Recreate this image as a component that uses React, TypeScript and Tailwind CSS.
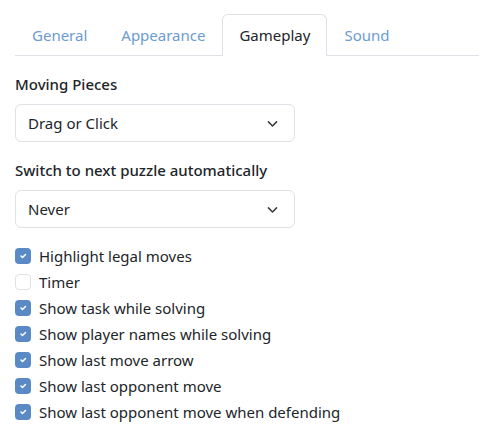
const tabs = ["General", "Appearance", "Gameplay", "Sound"];

const options = [
  { label: "Highlight legal moves", checked: true },
  { label: "Timer", checked: false },
  { label: "Show task while solving", checked: true },
  { label: "Show player names while solving", checked: true },
  { label: "Show last move arrow", checked: true },
  { label: "Show last opponent move", checked: true },
  { label: "Show last opponent move when defending", checked: true },
];

function Chevron() {
  return (
    <svg width="13" height="13" viewBox="0 0 16 16" fill="none" stroke="#343a40" strokeWidth="1.8" strokeLinecap="round" strokeLinejoin="round">
      <path d="M3 6l5 5 5-5" />
    </svg>
  );
}

function Select({ value }: { value: string }) {
  return (
    <div className="flex h-[38px] w-[280px] items-center justify-between rounded-md border border-[#dee2e6] pl-3 pr-[15px] text-[15px] text-[#212529]">
      <span>{value}</span>
      <Chevron />
    </div>
  );
}

function Checkbox({ checked }: { checked: boolean }) {
  if (!checked) {
    return <span className="h-4 w-4 shrink-0 rounded border border-[#dee2e6] bg-white" />;
  }
  return (
    <span className="flex h-4 w-4 shrink-0 items-center justify-center rounded bg-[#5a8ac6]">
      <svg width="10" height="10" viewBox="0 0 20 20" fill="none" stroke="#fff" strokeWidth="3" strokeLinecap="round" strokeLinejoin="round">
        <path d="M6 10l3 3 6-6" />
      </svg>
    </span>
  );
}

export default function App() {
  return (
    <div className="min-h-[440px] bg-white px-[15px] pt-[14px] font-['Noto_Sans',sans-serif] text-[#212529]">
      <div className="flex border-b border-[#dee2e6]">
        {tabs.map((t) => (
          <div
            key={t}
            className={
              t === "Gameplay"
                ? "-mb-px rounded-t-md border border-[#dee2e6] border-b-white bg-white px-4 py-2 text-[15px] leading-6 text-[#212529]"
                : "-mb-px border border-transparent px-4 py-2 text-[15px] leading-6 text-[#6c9bd2]"
            }
          >
            {t}
          </div>
        ))}
      </div>

      <div className="mt-4 text-[15px] font-medium leading-6">Moving Pieces</div>
      <div className="mt-2">
        <Select value="Drag or Click" />
      </div>

      <div className="mt-4 text-[15px] font-medium leading-6">Switch to next puzzle automatically</div>
      <div className="mt-2">
        <Select value="Never" />
      </div>

      <div className="mt-[15px] flex flex-col">
        {options.map((o) => (
          <label key={o.label} className="flex h-[26px] items-center gap-2 text-[15px]">
            <Checkbox checked={o.checked} />
            <span>{o.label}</span>
          </label>
        ))}
      </div>
    </div>
  );
}
